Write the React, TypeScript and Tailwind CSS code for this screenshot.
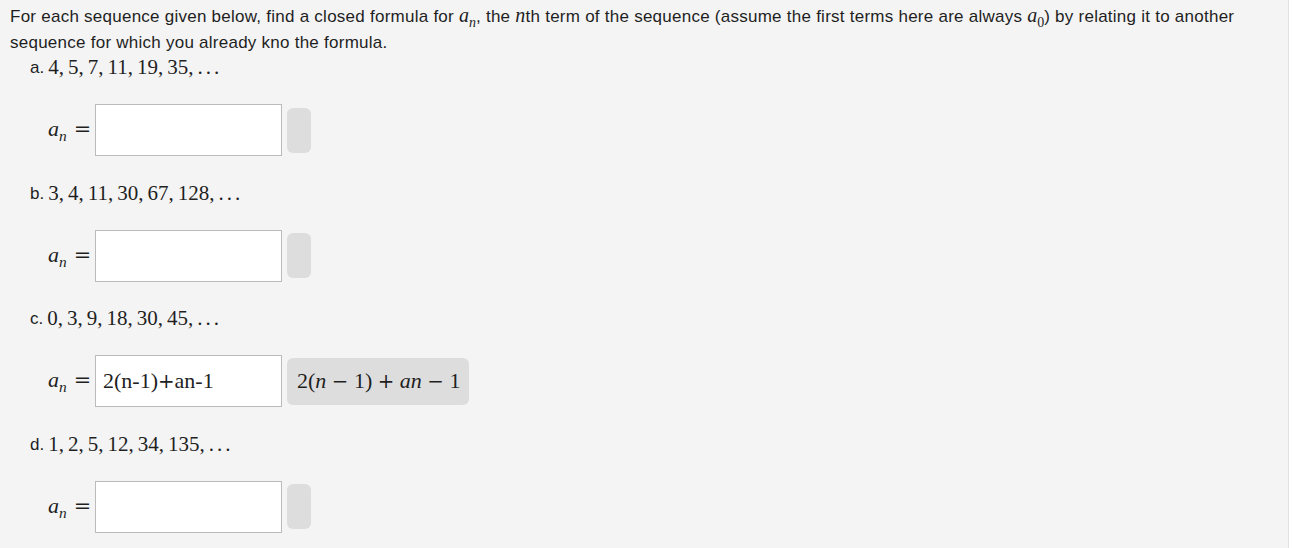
import React from 'react';

const serif = "font-['Liberation_Serif',_'DejaVu_Serif',_serif]";
const op = "font-['DejaVu_Serif',_serif]";

const Sub = ({ children, italic = true }: { children: React.ReactNode; italic?: boolean }) => (
	<span className={`text-[0.7em] align-sub leading-none ${italic ? 'italic' : ''}`}>{children}</span>
);

const Op = ({ children, className = '' }: { children: React.ReactNode; className?: string }) => (
	<span className={`${op} text-[0.9em] ${className}`}>{children}</span>
);

const Seq = ({ terms }: { terms: number[] }) => (
	<span className={`${serif} text-[21px] tracking-normal`}>
		{terms.map((t, i) => (
			<span key={i}>
				{t},<span className="inline-block w-[4px]" />
			</span>
		))}
		<span className="tracking-[3px]">...</span>
	</span>
);

interface ItemProps {
	letter: string;
	terms: number[];
	value?: React.ReactNode;
	preview?: React.ReactNode;
}

const Item = ({ letter, terms, value, preview }: ItemProps) => (
	<div className="pl-[20px] mb-[24.5px]">
		<div className="h-[25px] leading-[25px] flex items-center">
			<span className="mr-[4px]">{letter}.</span>
			<Seq terms={terms} />
		</div>
		<div className="mt-[24px] flex items-center pl-[18px] tracking-normal">
			<span className={`${serif} text-[22px] leading-none w-[43px] whitespace-nowrap pt-[2px]`}>
				<span className="italic">a</span>
				<Sub>n</Sub>
				<Op className="ml-[7px] text-[0.95em]">=</Op>
			</span>
			<div className="ml-[4px] w-[187px] h-[52px] bg-white border border-[#bbb] flex items-center px-[7px]">
				<span className={`${serif} text-[22px] text-[#222] whitespace-nowrap`}>{value}</span>
			</div>
			{preview ? (
				<div className="ml-[5px] h-[47px] w-[182px] rounded-[6px] bg-[#dddddd] flex items-center px-[10px]">
					{preview}
				</div>
			) : (
				<div className="ml-[5px] h-[45px] w-[24px] rounded-[6px] bg-[#dddddd]" />
			)}
		</div>
	</div>
);

export default function App() {
	return (
		<div className="bg-white w-[1292px] h-[548px]">
			<div className="w-[1289px] h-[548px] bg-[#f4f4f4] border-r border-[#e2e2e2] font-['Liberation_Sans',_Arial,_sans-serif] text-[17px] text-[#1f1f1f] px-[10px] pt-[3px] leading-[25px]">
				<p className="tracking-[0.25px]">
					For each sequence given below, find a closed formula for{' '}
					<span className={`${serif} text-[20px] tracking-normal`}>
						<span className="italic">a</span>
						<Sub>n</Sub>
					</span>
					, the <span className={`${serif} italic text-[20px]`}>n</span>th term of the sequence (assume the first terms here are always{' '}
					<span className={`${serif} text-[20px] tracking-normal`}>
						<span className="italic">a</span>
						<Sub italic={false}>0</Sub>
					</span>
					) by relating it to another sequence for which you already kno the formula.
				</p>
				<Item letter="a" terms={[4, 5, 7, 11, 19, 35]} />
				<Item letter="b" terms={[3, 4, 11, 30, 67, 128]} />
				<Item
					letter="c"
					terms={[0, 3, 9, 18, 30, 45]}
					value={
						<>
							2(n-1)<Op>+</Op>an-1
						</>
					}
					preview={
						<span className={`${serif} text-[22px] whitespace-nowrap`}>
							2(<span className="italic">n</span> <Op>−</Op> 1) <Op>+</Op>{' '}
							<span className="italic">an</span> <Op>−</Op> 1
						</span>
					}
				/>
				<Item letter="d" terms={[1, 2, 5, 12, 34, 135]} />
			</div>
		</div>
	);
}
